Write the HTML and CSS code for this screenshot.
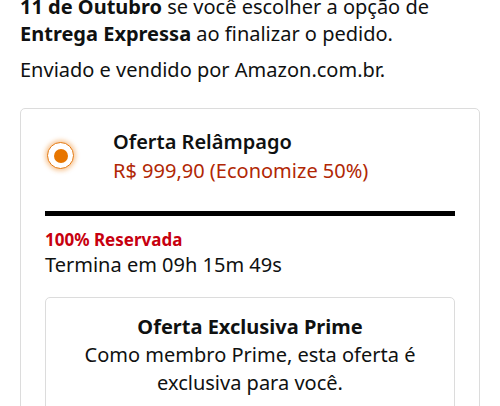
FILE: index.html
```html
<!DOCTYPE html>
<html lang="pt-BR">
<head>
  <meta charset="UTF-8">
  <title>Oferta Relâmpago</title>
  <meta name="viewport" content="width=device-width, initial-scale=1.0">
  <link rel="stylesheet" href="styles.css">
</head>
<body>
  <div class="page">
    <p class="delivery"><b>11 de Outubro</b> se você escolher a opção de <b>Entrega Expressa</b> ao finalizar o pedido.</p>
    <p class="seller">Enviado e vendido por Amazon.com.br.</p>

    <div class="card">
      <div class="offer">
        <span class="radio"><span class="dot"></span></span>
        <div class="offer-text">
          <div class="offer-title">Oferta Relâmpago</div>
          <div class="offer-price">R$ 999,90 (Economize 50%)</div>
        </div>
      </div>

      <div class="deal">
        <div class="bar"></div>
        <div class="claimed">100% Reservada</div>
        <div class="ends">Termina em 09h 15m 49s</div>

        <div class="prime">
          <div class="prime-title">Oferta Exclusiva Prime</div>
          <div class="prime-text">Como membro Prime, esta oferta é exclusiva para você.</div>
        </div>
      </div>
    </div>
  </div>
</body>
</html>
```

FILE: styles.css
```css
body {
  margin: 0;
  background: #fff;
  color: #0f1111;
  font-family: 'Noto Sans', sans-serif;
  overflow: hidden;
}

.page {
  padding: 0 20px;
  margin-top: -7px;
}

p {
  margin: 0;
  font-size: 20px;
}

.delivery {
  line-height: 27px;
}

.delivery b {
  font-weight: 700;
}

.seller {
  margin-top: 9px;
  line-height: 28px;
}

.card {
  margin-top: 24px;
  border: 1px solid #dcdcdc;
  border-radius: 5px;
  padding-bottom: 20px;
}

.offer {
  display: flex;
  align-items: flex-start;
  padding: 18px 0 0 26px;
}

.radio {
  flex: none;
  width: 27px;
  height: 27px;
  margin-top: 15px;
  border: 1.5px solid #e47911;
  border-radius: 50%;
  box-shadow: 0 0 4px 2px rgba(240, 140, 40, 0.45);
  display: flex;
  align-items: center;
  justify-content: center;
  box-sizing: border-box;
  background: #fff;
}

.dot {
  width: 14px;
  height: 14px;
  border-radius: 50%;
  background: #e77600;
}

.offer-text {
  margin-left: 39px;
}

.offer-title {
  font-size: 20px;
  font-weight: 600;
  line-height: 29px;
}

.offer-price {
  font-size: 20px;
  color: #b12704;
  line-height: 29px;
}

.deal {
  padding: 0 24px;
}

.bar {
  height: 5px;
  background: #000;
  margin-top: 26px;
}

.claimed {
  margin-top: 12px;
  font-size: 17px;
  font-weight: 700;
  color: #c7000f;
  line-height: 23px;
}

.ends {
  font-size: 20px;
  line-height: 28px;
}

.prime {
  margin-top: 18px;
  border: 1px solid #dcdcdc;
  border-radius: 5px;
  padding: 15px 20px 20px;
  text-align: center;
}

.prime-title {
  font-size: 20px;
  font-weight: 700;
  line-height: 28px;
}

.prime-text {
  font-size: 20px;
  line-height: 28px;
}
```
